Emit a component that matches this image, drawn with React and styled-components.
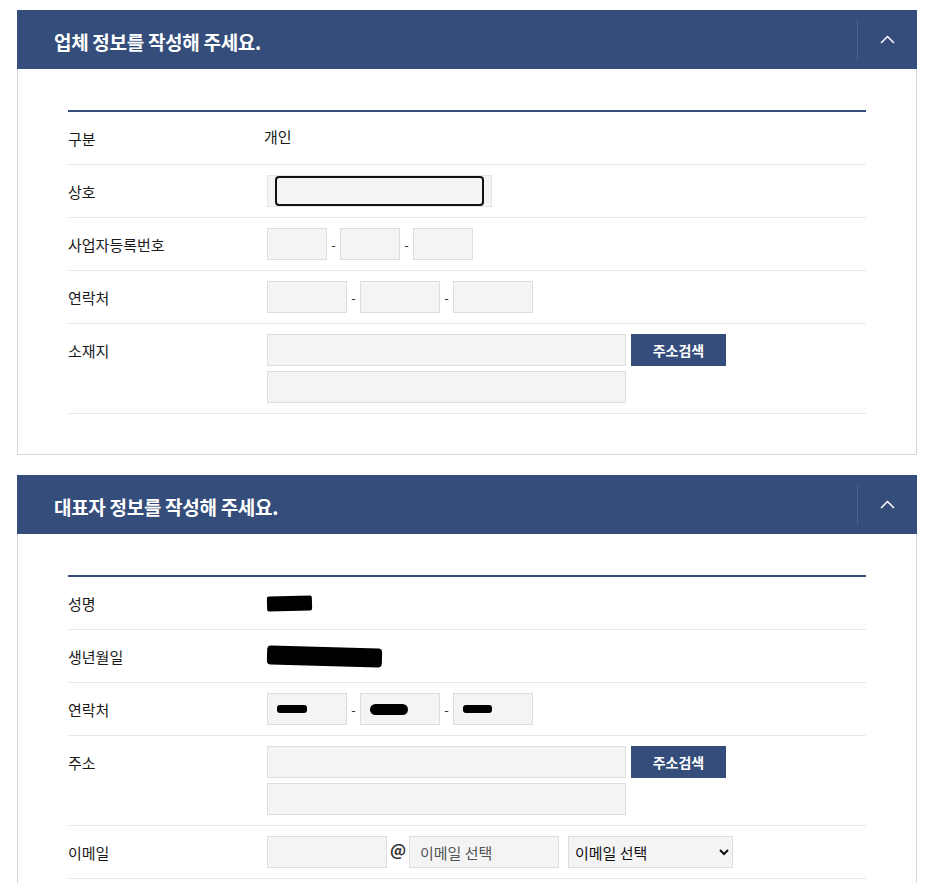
import React from 'react'
import styled, { createGlobalStyle } from 'styled-components'

const navy = '#344d7b'

const GlobalStyle = createGlobalStyle`
  body {
    margin: 0;
    background: #fff;
    font-family: "Noto Sans CJK KR", "Noto Sans", sans-serif;
    color: #222;
  }
  * { box-sizing: border-box; }
`

const Page = styled.div`
  width: 917px;
  padding: 10px 0 0 17px;
`

const Panel = styled.section`
  width: 900px;
  & + & {
    margin-top: 20px;
  }
`

const PanelHeader = styled.header`
  display: flex;
  align-items: center;
  height: 59px;
  background: ${navy};
  color: #fff;
`

const Title = styled.h2`
  flex: 1;
  margin: 0;
  padding: 3px 0 0 37px;
  font-size: 19px;
  font-weight: 700;
  letter-spacing: -0.3px;
`

const Toggle = styled.button`
  width: 60px;
  height: 40px;
  display: flex;
  align-items: center;
  justify-content: center;
  background: none;
  border: 0;
  border-left: 1px solid #4a6290;
  padding: 0;
  cursor: pointer;
`

const PanelBody = styled.div`
  border: 1px solid #d6d6d6;
  border-top: 0;
  padding: 41px 50px 40px;
`

const Table = styled.div`
  border-top: 2px solid ${navy};
`

const Row = styled.div`
  display: flex;
  padding: 10px 0;
  border-bottom: 1px solid #e9e9e9;
`

const Label = styled.div`
  width: 199px;
  height: 32px;
  padding-top: 2px;
  font-size: 15px;
  line-height: 30px;
  color: #1a1a1a;
`

const Value = styled.div`
  display: flex;
  flex-direction: column;
  gap: 5px;
`

const Line = styled.div`
  display: flex;
  align-items: center;
  height: 32px;
`

const Text = styled.div`
  margin-left: -3px;
  font-size: 15px;
  line-height: 30px;
  color: #1a1a1a;
`

const Box = styled.input`
  width: ${p => p.$w}px;
  height: 32px;
  border: 1px solid #dddddd;
  background: #f4f4f4;
  padding: 0 10px;
  font-family: inherit;
  font-size: 15px;
  color: #222;
  outline: none;
  &::placeholder {
    color: #555;
  }
`

const Filled = styled.div`
  width: ${p => p.$w}px;
  height: 32px;
  border: 1px solid #dddddd;
  background: #f4f4f4;
  padding-left: 9px;
  display: flex;
  align-items: center;
`

const FocusWrap = styled.div`
  width: 225px;
  height: 32px;
  border: 1px solid #e4e4e4;
  background: #f4f4f4;
  padding: 0 7px;
`

const FocusInput = styled.input`
  display: block;
  width: 100%;
  height: 30px;
  border: 2px solid #111;
  border-radius: 4px;
  background: #f4f4f4;
  outline: none;
`

const Sep = styled.span`
  width: ${p => p.$w || 13}px;
  text-align: center;
  font-size: ${p => (p.$at ? 16 : 13)}px;
  font-weight: ${p => (p.$at ? 700 : 400)};
  color: #333;
  align-self: ${p => (p.$at ? 'flex-start' : 'center')};
  line-height: ${p => (p.$at ? '26px' : 'normal')};
`

const Button = styled.button`
  margin-left: 5px;
  width: 95px;
  height: 32px;
  border: 0;
  background: ${navy};
  color: #fff;
  font-family: inherit;
  font-size: 14px;
  font-weight: 700;
  cursor: pointer;
`

const Select = styled.select`
  margin-left: 9px;
  width: 165px;
  height: 32px;
  border: 1px solid #dddddd;
  background: #f4f4f4;
  padding: 0 2px;
  font-family: inherit;
  font-size: 15px;
  color: #111;
  outline: none;
`

const Redacted = styled.span`
  display: inline-block;
  width: ${p => p.$w}px;
  height: ${p => p.$h}px;
  background: #000;
  border-radius: ${p => p.$r || 3}px;
  transform: rotate(${p => p.$rot || 0}deg);
`

function Chevron() {
  return (
    <svg width="15" height="9" viewBox="0 0 15 9">
      <polyline points="1,8 7.5,1.5 14,8" fill="none" stroke="#fff" strokeWidth="1.5" />
    </svg>
  )
}

function Section({ title, children }) {
  return (
    <Panel>
      <PanelHeader>
        <Title>{title}</Title>
        <Toggle aria-label="접기"><Chevron /></Toggle>
      </PanelHeader>
      <PanelBody>
        <Table>{children}</Table>
      </PanelBody>
    </Panel>
  )
}

function Field({ label, children }) {
  return (
    <Row>
      <Label>{label}</Label>
      <Value>{children}</Value>
    </Row>
  )
}

function Address() {
  return (
    <>
      <Line>
        <Box $w={359} />
        <Button>주소검색</Button>
      </Line>
      <Line>
        <Box $w={359} />
      </Line>
    </>
  )
}

export default function App() {
  return (
    <Page>
      <GlobalStyle />
      <Section title="업체 정보를 작성해 주세요.">
        <Field label="구분"><Text>개인</Text></Field>
        <Field label="상호">
          <FocusWrap><FocusInput /></FocusWrap>
        </Field>
        <Field label="사업자등록번호">
          <Line>
            <Box $w={60} /><Sep>-</Sep><Box $w={60} /><Sep>-</Sep><Box $w={60} />
          </Line>
        </Field>
        <Field label="연락처">
          <Line>
            <Box $w={80} /><Sep>-</Sep><Box $w={80} /><Sep>-</Sep><Box $w={80} />
          </Line>
        </Field>
        <Field label="소재지"><Address /></Field>
      </Section>

      <Section title="대표자 정보를 작성해 주세요.">
        <Field label="성명">
          <Line><Redacted $w={45} $h={15} $r={2} $rot={-1.5} /></Line>
        </Field>
        <Field label="생년월일">
          <Line><Redacted $w={115} $h={19} $r={4} $rot={1.5} /></Line>
        </Field>
        <Field label="연락처">
          <Line>
            <Filled $w={80}><Redacted $w={30} $h={8} /></Filled>
            <Sep>-</Sep>
            <Filled $w={80}><Redacted $w={38} $h={11} $r={6} /></Filled>
            <Sep>-</Sep>
            <Filled $w={80}><Redacted $w={29} $h={8} /></Filled>
          </Line>
        </Field>
        <Field label="주소"><Address /></Field>
        <Field label="이메일">
          <Line>
            <Box $w={120} />
            <Sep $w={22} $at>@</Sep>
            <Box $w={150} placeholder="이메일 선택" />
            <Select defaultValue="">
              <option value="">이메일 선택</option>
              <option>naver.com</option>
              <option>gmail.com</option>
              <option>daum.net</option>
            </Select>
          </Line>
        </Field>
      </Section>
    </Page>
  )
}
